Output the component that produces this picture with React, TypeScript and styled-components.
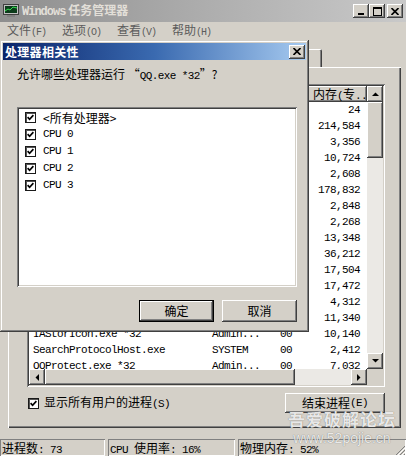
import React from 'react';
import styled, { createGlobalStyle, css } from 'styled-components';

const GlobalStyle = createGlobalStyle`
  html, body { margin: 0; padding: 0; background: #d4d0c8; }
  body { width: 406px; height: 456px; overflow: hidden; font-family: "Noto Sans CJK SC", sans-serif; font-size: 12px; color: #000; }
  * { box-sizing: border-box; }
`;

const raised = css`
  box-shadow: inset -1px -1px #404040, inset 1px 1px #ffffff, inset -2px -2px #808080, inset 2px 2px #d4d0c8;
`;
const sunken = css`
  box-shadow: inset 1px 1px #808080, inset -1px -1px #ffffff, inset 2px 2px #404040, inset -2px -2px #d4d0c8;
`;

const M = styled.span<{ $size?: number }>`
  font-family: "Liberation Mono", monospace;
  font-size: ${(p) => p.$size ?? 11}px;
  letter-spacing: ${(p) => ((p.$size ?? 11) === 11 ? -0.6 : -1)}px;
`;

const Screen = styled.div`
  position: relative;
  width: 406px;
  height: 456px;
  background: #d4d0c8;
  overflow: hidden;
  display: flex;
  flex-direction: column;
`;

const TitleBar = styled.div`
  height: 22px;
  background: linear-gradient(90deg, #8e8e8e 0%, #b0b0b0 55%, #c9c9c9 100%);
  display: flex;
  align-items: center;
  padding: 0 3px 0 3px;
`;
const TitleText = styled.span`
  flex: 1;
  margin-left: 3px;
  color: #e2dfd8;
  font-weight: bold;
  font-size: 12px;
  line-height: 14px;
  white-space: nowrap;
`;
const TitleBtn = styled.div<{ $gap?: boolean }>`
  width: 16px;
  height: 14px;
  background: #d4d0c8;
  ${raised};
  display: flex;
  align-items: center;
  justify-content: center;
  margin-left: ${(p) => (p.$gap ? 2 : 0)}px;
`;

const MenuBar = styled.div`
  height: 19px;
  display: flex;
  align-items: center;
  padding-left: 7px;
`;
const MenuItem = styled.span`
  width: 55px;
  color: #5c5c5c;
  font-size: 12px;
  line-height: 14px;
  white-space: nowrap;
`;

const TabStrip = styled.div`
  height: 26px;
  display: flex;
  align-items: flex-end;
  padding-left: 8px;
`;
const Tab = styled.div<{ $w: number; $active?: boolean }>`
  width: ${(p) => p.$w}px;
  height: ${(p) => (p.$active ? 20 : 18)}px;
  margin-bottom: ${(p) => (p.$active ? -1 : 0)}px;
  padding-top: 2px;
  text-align: center;
  font-size: 12px;
  line-height: 14px;
  border-radius: 2px 2px 0 0;
  box-shadow: inset 1px 1px #ffffff, inset -1px 0 #404040, inset -2px 0 #808080;
`;

const Panel = styled.div`
  margin: 0 5px 0 8px;
  height: 361px;
  padding: 17px 16px 0 19px;
  box-shadow: inset 1px 1px #ffffff, inset -1px -1px #404040, inset -2px -2px #808080;
  display: flex;
  flex-direction: column;
`;

const ListView = styled.div`
  height: 303px;
  padding: 2px;
  background: #ffffff;
  ${sunken};
  display: grid;
  grid-template-columns: 1fr 16px;
  grid-template-rows: 1fr 16px;
`;
const ListContent = styled.div`
  overflow: hidden;
  display: flex;
  flex-direction: column;
`;
const HeaderRow = styled.div`
  display: flex;
  height: 16px;
  flex: none;
`;
const HeaderCell = styled.div<{ $w: number }>`
  width: ${(p) => p.$w}px;
  flex: none;
  height: 16px;
  padding-left: 6px;
  background: #d4d0c8;
  box-shadow: inset -1px -1px #404040, inset 1px 1px #ffffff, inset -2px -2px #808080;
  font-size: 12px;
  line-height: 16px;
  white-space: nowrap;
  overflow: hidden;
`;
const Row = styled.div`
  display: flex;
  height: 16px;
  flex: none;
  font-family: "Liberation Mono", monospace;
  font-size: 11px;
  letter-spacing: -0.6px;
  line-height: 16px;
`;
const Cell = styled.div<{ $w: number; $right?: boolean; $pl?: number; $pr?: number }>`
  width: ${(p) => p.$w}px;
  flex: none;
  white-space: nowrap;
  overflow: hidden;
  text-align: ${(p) => (p.$right ? 'right' : 'left')};
  padding-left: ${(p) => p.$pl ?? 0}px;
  padding-right: ${(p) => p.$pr ?? 0}px;
`;

const VScroll = styled.div`
  display: flex;
  flex-direction: column;
`;
const HScroll = styled.div`
  display: flex;
`;
const ScrollBtn = styled.div`
  width: 16px;
  height: 16px;
  flex: none;
  background: #d4d0c8;
  ${raised};
  display: flex;
  align-items: center;
  justify-content: center;
`;
const Thumb = styled.div<{ $len: number; $horiz?: boolean }>`
  flex: none;
  ${(p) => (p.$horiz ? `width:${p.$len}px; height:16px;` : `height:${p.$len}px; width:16px;`)}
  background: #d4d0c8;
  ${raised};
`;
const Track = styled.div`
  flex: 1;
  background: #ebe9e5;
`;
const Corner = styled.div`
  background: #d4d0c8;
`;

const BottomRow = styled.div`
  margin-top: 6px;
  display: flex;
  justify-content: space-between;
  align-items: flex-start;
`;
const CheckLabel = styled.div`
  margin-top: 1px;
  margin-left: 1px;
  display: flex;
  align-items: center;
  gap: 5px;
  font-size: 12px;
  line-height: 16px;
`;
const CheckBox = styled.div`
  width: 11px;
  height: 11px;
  flex: none;
  background: #ffffff;
  border: 1px solid #1a1a1a;
  box-shadow: inset 1px 1px #555555;
  display: flex;
  align-items: center;
  justify-content: center;
`;
const Button = styled.div<{ $w: number; $h: number; $default?: boolean }>`
  width: ${(p) => p.$w}px;
  height: ${(p) => p.$h}px;
  display: flex;
  align-items: center;
  justify-content: center;
  font-size: 12px;
  line-height: 14px;
  background: #d4d0c8;
  ${(p) =>
    p.$default
      ? `box-shadow: inset 0 0 0 1px #000, inset -2px -2px #404040, inset 2px 2px #ffffff, inset -3px -3px #808080;`
      : `box-shadow: inset -1px -1px #404040, inset 1px 1px #ffffff, inset -2px -2px #808080, inset 2px 2px #d4d0c8;`}
`;

const StatusBar = styled.div`
  margin-top: 11px;
  height: 17px;
  display: flex;
  gap: 3px;
`;
const StatusPanel = styled.div<{ $w?: number }>`
  position: relative;
  ${(p) => (p.$w ? `width:${p.$w}px; flex:none;` : 'flex:1;')}
  height: 17px;
  padding-left: 2px;
  box-shadow: inset 1px 1px #808080, inset -1px -1px #ffffff;
  font-size: 12px;
  line-height: 17px;
  white-space: nowrap;
`;
const Grip = styled.svg`
  position: absolute;
  right: 0;
  bottom: 0;
`;

/* Dialog */
const Dialog = styled.div`
  position: absolute;
  left: 0;
  top: 40px;
  width: 309px;
  height: 292px;
  padding: 3px;
  background: #d4d0c8;
  box-shadow: inset -1px -1px #404040, inset 1px 1px #d4d0c8, inset -2px -2px #808080, inset 2px 2px #ffffff;
  display: flex;
  flex-direction: column;
`;
const DialogTitle = styled.div`
  height: 17px;
  flex: none;
  background: linear-gradient(90deg, #0a246a 0%, #3a6ab0 50%, #a6caf0 100%);
  display: flex;
  align-items: center;
  justify-content: space-between;
  padding: 0 1px 0 2px;
`;
const DialogTitleText = styled.span`
  color: #ffffff;
  font-weight: bold;
  font-size: 12px;
  line-height: 14px;
  letter-spacing: 0.3px;
`;
const DialogBody = styled.div`
  flex: 1;
  display: flex;
  flex-direction: column;
  padding: 0 9px 0 14px;
`;
const Prompt = styled.div`
  margin-top: 6px;
  font-size: 12px;
  line-height: 16px;
  white-space: nowrap;
`;
const ListBox = styled.div`
  margin-top: 23px;
  height: 180px;
  padding: 2px;
  background: #ffffff;
  ${sunken};
  display: flex;
  flex-direction: column;
`;
const ListItem = styled.div`
  height: 17px;
  display: flex;
  align-items: center;
  gap: 7px;
  padding-left: 6px;
  font-size: 12px;
  line-height: 17px;
`;
const ButtonRow = styled.div`
  margin-top: 13px;
  display: flex;
  justify-content: flex-end;
  gap: 8px;
`;

const Watermark = styled.div`
  position: absolute;
  left: 288px;
  top: 408px;
  display: flex;
  flex-direction: column;
  align-items: center;
  pointer-events: none;
`;
const WmTitle = styled.span`
  font-size: 17px;
  line-height: 22px;
  font-weight: bold;
  color: rgba(255, 255, 255, 0.85);
  text-shadow: 0 0 1px rgba(90, 90, 90, 0.9);
  letter-spacing: 1px;
`;
const WmUrl = styled.span`
  font-family: "Liberation Sans", sans-serif;
  font-size: 14px;
  line-height: 16px;
  color: rgba(255, 255, 255, 0.85);
  text-shadow: 0 0 1px rgba(90, 90, 90, 0.9);
`;

const Tick = () => (
  <CheckBox>
    <svg width="7" height="7" viewBox="0 0 7 7">
      <path d="M0.6 3.2 L2.6 5.3 L6.4 1.2" stroke="#000" strokeWidth="1.7" fill="none" />
    </svg>
  </CheckBox>
);

const Arrow = ({ dir }: { dir: 'up' | 'down' | 'left' | 'right' }) => {
  const pts = {
    up: '0,4 7,4 3.5,0.5',
    down: '0,0 7,0 3.5,3.5',
    left: '4,0 4,7 0.5,3.5',
    right: '0,0 0,7 3.5,3.5',
  }[dir];
  const horiz = dir === 'left' || dir === 'right';
  return (
    <svg width={horiz ? 4 : 7} height={horiz ? 7 : 4} viewBox={horiz ? '0 0 4 7' : '0 0 7 4'}>
      <polygon points={pts} fill="#000" />
    </svg>
  );
};

const WinIcon = () => (
  <svg width="16" height="14" viewBox="0 0 16 14">
    <rect x="0.5" y="0.5" width="15" height="10" fill="#c0c0c0" stroke="#404040" />
    <rect x="2" y="2" width="12" height="7" fill="#0b3b1a" />
    <polyline points="2,7 5,5 7,6 10,3 14,4" stroke="#35e050" strokeWidth="1" fill="none" />
    <rect x="4" y="11" width="8" height="2" fill="#808080" />
  </svg>
);

const procs: [string, string, string, string][] = [
  ['System Idle Process', 'SYSTEM', '84', '24'],
  ['explorer.exe', 'Admin...', '02', '214,584'],
  ['csrss.exe', 'SYSTEM', '00', '3,356'],
  ['svchost.exe', 'SYSTEM', '00', '10,724'],
  ['taskhost.exe', 'Admin...', '00', '2,608'],
  ['QQ.exe *32', 'Admin...', '06', '178,832'],
  ['dwm.exe', 'Admin...', '00', '2,848'],
  ['conhost.exe', 'Admin...', '00', '2,268'],
  ['svchost.exe', 'SYSTEM', '00', '13,348'],
  ['SearchIndexer.exe', 'SYSTEM', '00', '36,212'],
  ['taskmgr.exe', 'Admin...', '02', '17,504'],
  ['TXPlatform.exe *32', 'Admin...', '00', '17,472'],
  ['winlogon.exe', 'SYSTEM', '00', '4,312'],
  ['spoolsv.exe', 'SYSTEM', '00', '11,340'],
  ['IAStorIcon.exe *32', 'Admin...', '00', '10,140'],
  ['SearchProtocolHost.exe', 'SYSTEM', '00', '2,412'],
  ['QQProtect.exe *32', 'Admin...', '00', '7,032'],
];

const cols = [178, 58, 42, 60];

export default function App() {
  return (
    <>
      <GlobalStyle />
      <Screen>
        <TitleBar>
          <WinIcon />
          <TitleText>
            <M $size={12}>Windows</M> 任务管理器
          </TitleText>
          <TitleBtn>
            <svg width="8" height="7" viewBox="0 0 8 7">
              <rect x="1" y="5" width="6" height="2" fill="#000" />
            </svg>
          </TitleBtn>
          <TitleBtn>
            <svg width="9" height="9" viewBox="0 0 9 9">
              <rect x="0.5" y="0.5" width="8" height="8" stroke="#000" fill="none" />
              <rect x="0" y="0" width="9" height="2" fill="#000" />
            </svg>
          </TitleBtn>
          <TitleBtn $gap>
            <svg width="8" height="7" viewBox="0 0 8 7">
              <path d="M0.5 0 L7.5 7 M7.5 0 L0.5 7" stroke="#000" strokeWidth="1.6" />
            </svg>
          </TitleBtn>
        </TitleBar>

        <MenuBar>
          <MenuItem>文件<M $size={10}>(F)</M></MenuItem>
          <MenuItem>选项<M $size={10}>(O)</M></MenuItem>
          <MenuItem>查看<M $size={10}>(V)</M></MenuItem>
          <MenuItem>帮助<M $size={10}>(H)</M></MenuItem>
        </MenuBar>

        <TabStrip>
          <Tab $w={64}>应用程序</Tab>
          <Tab $w={50} $active>进程</Tab>
          <Tab $w={50}>服务</Tab>
          <Tab $w={50}>性能</Tab>
          <Tab $w={50}>联网</Tab>
          <Tab $w={50}>用户</Tab>
        </TabStrip>

        <Panel>
          <ListView>
            <ListContent>
              <HeaderRow>
                <HeaderCell $w={cols[0]}>映像名称</HeaderCell>
                <HeaderCell $w={cols[1]}>用户名</HeaderCell>
                <HeaderCell $w={cols[2]}><M>CPU</M></HeaderCell>
                <HeaderCell $w={cols[3]}>内存<M>(</M>专<M>...</M></HeaderCell>
              </HeaderRow>
              {procs.map(([n, u, c, m], i) => (
                <Row key={i}>
                  <Cell $w={cols[0]} $pl={4}>{n}</Cell>
                  <Cell $w={cols[1]} $pl={5}>{u}</Cell>
                  <Cell $w={cols[2]} $right $pr={15}>{c}</Cell>
                  <Cell $w={cols[3]} $right $pr={7}>{m}</Cell>
                </Row>
              ))}
            </ListContent>
            <VScroll>
              <ScrollBtn><Arrow dir="up" /></ScrollBtn>
              <Thumb $len={56} />
              <Track />
              <ScrollBtn><Arrow dir="down" /></ScrollBtn>
            </VScroll>
            <HScroll>
              <ScrollBtn><Arrow dir="left" /></ScrollBtn>
              <Thumb $len={250} $horiz />
              <Track />
              <ScrollBtn><Arrow dir="right" /></ScrollBtn>
            </HScroll>
            <Corner />
          </ListView>
          <BottomRow>
            <CheckLabel>
              <Tick />
              <span>显示所有用户的进程<M>(S)</M></span>
            </CheckLabel>
            <Button $w={100} $h={20}>结束进程<M>(E)</M></Button>
          </BottomRow>
        </Panel>

        <StatusBar>
          <StatusPanel $w={105}>进程数<M>: 73</M></StatusPanel>
          <StatusPanel $w={127}><M>CPU </M>使用率<M>: 16%</M></StatusPanel>
          <StatusPanel>
            物理内存<M>: 52%</M>
            <Grip width="12" height="12" viewBox="0 0 12 12">
              <path d="M11 2 L2 11 M11 6 L6 11 M11 10 L10 11" stroke="#808080" strokeWidth="1" />
              <path d="M12 3 L3 12 M12 7 L7 12" stroke="#ffffff" strokeWidth="1" />
            </Grip>
          </StatusPanel>
        </StatusBar>

        <Dialog>
          <DialogTitle>
            <DialogTitleText>处理器相关性</DialogTitleText>
            <TitleBtn>
              <svg width="8" height="7" viewBox="0 0 8 7">
                <path d="M0.5 0 L7.5 7 M7.5 0 L0.5 7" stroke="#000" strokeWidth="1.6" />
              </svg>
            </TitleBtn>
          </DialogTitle>
          <DialogBody>
            <Prompt>
              允许哪些处理器运行 “<M>QQ.exe *32</M>”?
            </Prompt>
            <ListBox>
              <ListItem><Tick />&lt;所有处理器&gt;</ListItem>
              {['CPU 0', 'CPU 1', 'CPU 2', 'CPU 3'].map((c) => (
                <ListItem key={c}><Tick /><M>{c}</M></ListItem>
              ))}
            </ListBox>
            <ButtonRow>
              <Button $w={75} $h={22} $default>确定</Button>
              <Button $w={75} $h={22}>取消</Button>
            </ButtonRow>
          </DialogBody>
        </Dialog>

        <Watermark>
          <WmTitle>吾爱破解论坛</WmTitle>
          <WmUrl>www.52pojie.cn</WmUrl>
        </Watermark>
      </Screen>
    </>
  );
}
